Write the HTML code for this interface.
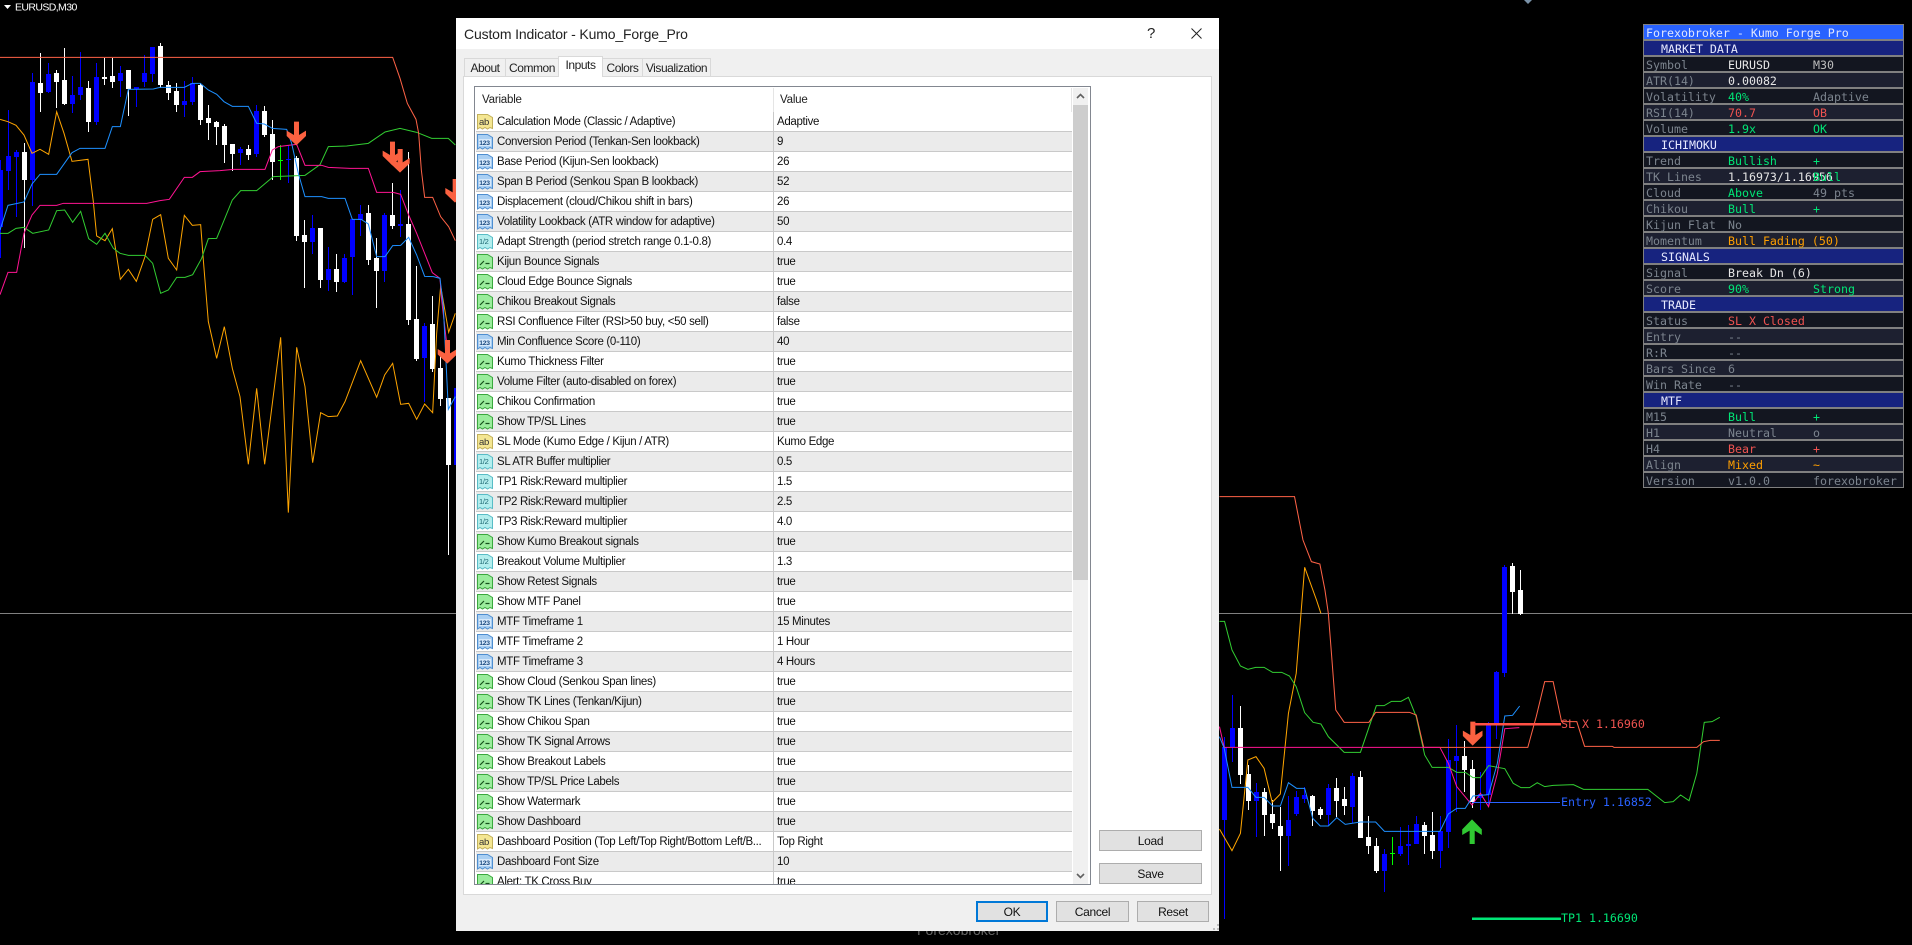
<!DOCTYPE html>
<html><head><meta charset="utf-8"><title>Custom Indicator</title>
<style>
html,body{margin:0;padding:0;background:#000;width:1912px;height:945px;overflow:hidden}
#chart{position:absolute;left:0;top:0}
.abs,.dlg div,.dash div{position:absolute}
.dlg{position:absolute;left:456px;top:18px;width:763px;height:913px;background:#f0f0f0;font-family:"Liberation Sans",sans-serif;color:#111}
.ttl{left:0;top:0;width:763px;height:31px;background:#fff}
.ttx{left:8px;top:7px;font-size:14px;line-height:18px;letter-spacing:-.15px;white-space:nowrap;color:#222}
.tab{top:40px;height:18px;background:#f0f0f0;border:1px solid #d9d9d9;border-bottom:none;box-sizing:border-box;text-align:center;font-size:12px;line-height:18px;letter-spacing:-.45px;color:#222}
.tab.on{top:38px;height:21px;background:#fff;line-height:17px;z-index:3}
.pane{left:7px;top:58px;width:749px;height:819px;background:#fff;border:1px solid #d9d9d9;box-sizing:border-box}
.lst{left:18px;top:68px;width:617px;height:799px;background:#fff;border:1px solid #828790;box-sizing:border-box}
.rows{left:20px;top:94px;width:596px;height:772px;overflow:hidden}
.dlg .r{position:relative;height:20px;box-sizing:border-box;border-bottom:1px solid #c9c9c9;white-space:nowrap;font-size:11.5px;line-height:19px;letter-spacing:-.33px}
.dlg .r:nth-child(even){background:#ebebeb}
.r svg{position:absolute;left:1px;top:1px;width:16px;height:17px}
.r b{position:absolute;left:21px;top:1px;font-weight:normal}
.r i{position:absolute;left:297px;top:0;width:1px;height:20px;background:#c9c9c9}
.r u{position:absolute;left:301px;top:1px;text-decoration:none}
.hd{font-size:11.5px;line-height:14px;color:#222;letter-spacing:-.2px}
.btn{background:#e1e1e1;border:1px solid #adadad;box-sizing:border-box;text-align:center;font-size:12px;line-height:20px;letter-spacing:-.3px;color:#111}
.dash{position:absolute;left:1643px;top:24px;width:261px;height:464px;background:#808080;font-family:"DejaVu Sans Mono",monospace;font-size:11.62px;color:#7c848e}
.d{left:1px;width:259px;height:14px;line-height:14px;white-space:pre}
.d span{position:absolute;top:1px}
.d .a{left:2px}.d .b{left:84px}.d .c{left:169px}
.o{background:#131620}.e{background:#1d2030}
.h{background:#17237f;color:#e8eaff}.h span{left:17px}
.w{color:#e6e6e6}.m{color:#bdbdbd}.g{color:#00e676}.x{color:#ef5350}.y{color:#ff9f00}
</style></head><body>
<svg id="chart" width="1912" height="945" viewBox="0 0 1912 945" xmlns="http://www.w3.org/2000/svg">
<rect width="1912" height="945" fill="#000"/>
<path d="M0 613.5H1912" stroke="#808080" stroke-width="1" shape-rendering="crispEdges"/>
<g shape-rendering="crispEdges">
<path fill="none" stroke="#0000ff" stroke-width="1" d="M.5 160V258M8.5 110V190M16.5 150V217M32.5 73V206M48.5 63V93M72.5 76V113M80.5 52V100M96.5 63V125M120.5 66V97M136.5 87V107M144.5 55V87M152.5 47V82M184.5 81V117M192.5 77V105M240.5 147V165M256.5 105V157M288.5 145V183M312.5 215V254M328.5 247V291M344.5 254V283M352.5 219V295M360.5 205V236M384.5 213V282M400.5 190V237M424.5 323V402M1224.5 737V919M1232.5 695V762M1256.5 783V837M1288.5 796V866M1296.5 791V816M1304.5 787V803M1328.5 784V826M1352.5 773V823M1384.5 849V892M1400.5 827V856M1408.5 825V865M1416.5 816V844M1440.5 816V868M1448.5 739V848M1456.5 725V812M1480.5 772V810M1488.5 722V807M1496.5 671V739M1504.5 565V677"/>
<path fill="#0000ff" d="M-2 170h5v57h-5zM6 156h5v15h-5zM14 152h5v5h-5zM30 82h5v98h-5zM46 74h5v18h-5zM70 95h5v9h-5zM78 87h5v8h-5zM94 77h5v45h-5zM118 73h5v8h-5zM134 87h5v2h-5zM142 73h5v9h-5zM150 47h5v27h-5zM182 101h5v4h-5zM190 83h5v19h-5zM238 149h5v4h-5zM254 111h5v43h-5zM286 159h5v1h-5zM310 228h5v14h-5zM326 269h5v11h-5zM342 258h5v24h-5zM350 219h5v38h-5zM358 214h5v6h-5zM382 215h5v56h-5zM398 224h5v2h-5zM422 326h5v32h-5zM454 388h5v77h-5zM1222 747h5v73h-5zM1230 728h5v19h-5zM1254 792h5v9h-5zM1286 820h5v16h-5zM1294 797h5v17h-5zM1302 795h5v4h-5zM1326 788h5v27h-5zM1350 776h5v31h-5zM1382 854h5v17h-5zM1398 846h5v8h-5zM1406 844h5v2h-5zM1414 824h5v20h-5zM1438 831h5v20h-5zM1446 760h5v72h-5zM1454 756h5v5h-5zM1478 794h5v4h-5zM1486 725h5v70h-5zM1494 672h5v51h-5zM1502 567h5v106h-5z"/>
<path fill="none" stroke="#fff" stroke-width="1" d="M24.5 143V248M40.5 53V112M56.5 70V108M64.5 48V105M88.5 81V132M104.5 58V85M112.5 58V88M128.5 70V116M160.5 43V88M168.5 81V100M176.5 83V112M200.5 83V125M208.5 105V140M216.5 121V145M224.5 124V163M232.5 144V171M248.5 145V160M264.5 106V137M272.5 120V180M296.5 156V241M304.5 220V288M320.5 228V288M336.5 254V292M368.5 205V265M376.5 238V308M392.5 183V229M408.5 152V325M416.5 266V361M432.5 296V372M440.5 355V406M448.5 398V555M1240.5 706V784M1248.5 765V810M1264.5 788V836M1272.5 800V829M1280.5 807V871M1312.5 795V826M1320.5 807V819M1336.5 778V817M1344.5 787V815M1360.5 771V838M1368.5 816V854M1376.5 838V873M1424.5 822V854M1432.5 812V859M1464.5 741V792M1472.5 760V808M1512.5 563V614M1520.5 570V615"/>
<path fill="#fff" d="M22 152h5v28h-5zM38 83h5v10h-5zM54 73h5v9h-5zM62 80h5v24h-5zM86 88h5v34h-5zM102 77h5v2h-5zM110 76h5v6h-5zM126 70h5v19h-5zM158 46h5v39h-5zM166 85h5v8h-5zM174 91h5v14h-5zM198 85h5v35h-5zM206 118h5v5h-5zM214 122h5v5h-5zM222 126h5v19h-5zM230 144h5v10h-5zM246 149h5v6h-5zM262 111h5v24h-5zM270 134h5v28h-5zM294 158h5v78h-5zM302 235h5v7h-5zM318 228h5v52h-5zM334 269h5v13h-5zM366 213h5v47h-5zM374 258h5v13h-5zM390 215h5v11h-5zM406 224h5v96h-5zM414 319h5v40h-5zM430 324h5v45h-5zM438 368h5v31h-5zM446 398h5v67h-5zM1238 728h5v47h-5zM1246 774h5v27h-5zM1262 792h5v23h-5zM1270 814h5v9h-5zM1278 826h5v10h-5zM1310 796h5v15h-5zM1318 809h5v6h-5zM1334 788h5v13h-5zM1342 799h5v7h-5zM1358 777h5v61h-5zM1366 837h5v9h-5zM1374 846h5v25h-5zM1422 825h5v11h-5zM1430 835h5v16h-5zM1462 756h5v14h-5zM1470 769h5v33h-5zM1510 566h5v26h-5zM1518 590h5v24h-5z"/>
<path fill="none" stroke="#00ff00" stroke-width="1" d="M280.5 145V180M278 160.5H283M1392.5 837V865M1390 853.5H1395"/>
</g>
<g fill="none" stroke-width="3" transform="scale(.33333)">
<polyline stroke="#ffa500" points="0,358 24,365 48,376 72,405 96,460 120,448 146,463 170,335 192,400 216,484 264,478 280,605 290,708 315,722 337,686 361,838 385,808 409,844 435,770 458,658 482,644 505,775 530,810 553,646 577,676 602,674 610,780 625,965 650,1075 673,980 697,1105 720,1190 745,1393 770,1165 794,1393 842,1012 865,1538 890,1042 915,1160 938,1388 962,1238 985,1250 1012,1248 1035,1205 1082,1082 1130,1192 1154,1125 1178,1090 1202,1213 1226,1210 1250,1258 1274,1212 1298,1238 1310,1000 1322,858 1346,997 1366,940"/>
<polyline stroke="#32cd32" points="0,700 24,700 48,685 72,682 98,700 146,690 170,632 194,630 218,667 242,634 266,716 290,733 315,700 340,745 360,760 385,766 435,766 458,790 482,880 505,870 530,832 555,832 578,824 605,775 625,716 650,715 697,600 722,572 770,572 820,530 915,526 960,494 985,440 1040,438 1105,430 1155,396 1200,385 1250,397 1295,415 1345,415 1366,435"/>
<polyline stroke="#ff6347" points="0,172 1178,172 1200,235 1222,310 1248,358 1256,400 1264,510 1274,592 1298,592 1322,650 1346,680 1366,722"/>
<polyline stroke="#ff1493" points="0,884 24,817 50,817 72,700 96,645 120,616 170,616 190,610 440,610 480,602 508,598 553,532 577,532 600,515 660,512 700,508 795,508 817,450 835,440 890,433 915,496 965,496 985,502 1050,505 1105,505 1130,577 1180,577 1202,583 1226,645 1250,700 1297,818 1320,835 1325,900 1340,1030"/>
<polyline stroke="#1e90ff" points="0,690 24,616 72,606 96,552 120,523 170,523 216,458 240,445 315,445 337,380 361,380 385,268 460,267 480,262 553,262 577,250 601,250 625,270 650,283 672,305 697,319 745,319 770,370 793,372 817,385 860,388 875,430 895,520 915,590 965,590 985,595 1035,595 1057,658 1083,658 1105,672 1130,770 1155,770 1178,737 1202,736 1226,712 1250,765 1274,829 1300,830 1320,835 1330,920 1345,1228 1366,1190"/>
<g fill="#fb6140" stroke="none">
<polygon points="882,365 897,365 897,405 918,392 918,408 889,436 860,408 860,392 882,405"/>
<polygon points="1170,425 1185,425 1185,465 1206,452 1206,468 1177,496 1148,468 1148,452 1170,465"/>
<polygon points="1193,447 1208,447 1208,487 1229,474 1229,490 1200,518 1171,490 1171,474 1193,487"/>
<polygon points="1335,1020 1350,1020 1350,1060 1371,1047 1371,1063 1342,1091 1313,1063 1313,1047 1335,1060"/>
<polygon points="1358,537 1373,537 1373,577 1394,564 1394,580 1365,608 1336,580 1336,564 1358,577"/>
</g>
</g>
<g fill="none" stroke-width="3" transform="translate(1210 540) scale(.33807 .33333)">
<polyline stroke="#ffa500" points="28,867 65,932 90,880 112,660 136,650 160,685 184,787 208,762 232,520 255,400 280,82 315,180 328,220"/>
<polyline stroke="#32cd32" points="28,244 43,244 65,330 90,378 112,388 135,382 160,382 185,397 212,397 235,408 255,440 280,518 305,547 328,552 350,590 397,637 445,637 492,497 515,497 537,484 565,484 587,472 610,530 635,645 657,682 705,682 730,697 755,697 778,713 800,713 824,677 872,686 897,730 920,743 945,743 968,728 990,740 1015,736 1075,734 1105,748 1295,748 1345,788 1370,785 1392,765 1417,782 1440,700 1462,547 1485,545 1508,532"/>
<polyline stroke="#ff6347" points="28,-130 250,-130 275,0 300,65 325,72 340,150 350,220 360,350 372,510 397,547 470,547 490,517 590,517 610,525 632,622 940,622 965,530 990,425 1015,425 1040,545 1085,545 1108,619 1190,619 1195,622 1440,622 1460,605 1480,601 1508,601"/>
<polyline stroke="#ff1493" points="28,560 42,622 680,622 705,670 730,740 775,795 800,760 824,800 850,700 872,566 915,563"/>
<polyline stroke="#1e90ff" points="28,590 42,625 65,742 112,742 136,772 160,772 185,798 208,798 232,728 256,745 280,745 304,835 326,858 350,858 375,833 400,853 445,846 490,846 516,874 680,874 705,822 730,805 755,805 778,768 824,764 850,670 872,528 895,526 916,498"/>
<polygon fill="#fb6140" stroke="none" points="770,545 785,545 785,585 806,572 806,588 777,617 748,588 748,572 770,585"/>
<polygon fill="#30c832" stroke="none" points="768,912 783,912 783,872 804,885 804,868 775,838 746,868 746,885 768,872"/>
</g>
<path d="M1474 724H1561" stroke="#ff5045" stroke-width="2.5" shape-rendering="crispEdges"/>
<path d="M1472 802.5H1560" stroke="#2962ff" stroke-width="1" shape-rendering="crispEdges"/>
<path d="M1472 918.5H1561" stroke="#00e676" stroke-width="2.5" shape-rendering="crispEdges"/>
<g font-family="'DejaVu Sans Mono',monospace" font-size="11.62">
<text x="1561" y="728" fill="#ef5350">SL X 1.16960</text>
<text x="1561" y="806" fill="#2962ff">Entry 1.16852</text>
<text x="1561" y="922" fill="#00e676">TP1 1.16690</text>
</g>
<polygon points="4,5 11,5 7.5,9" fill="#fff"/>
<text x="15" y="10.5" font-family="'Liberation Sans',sans-serif" font-size="10.5" letter-spacing="-.6" fill="#fff">EURUSD,M30</text>
<polygon points="1524,0 1532,0 1528,4" fill="#7a92a8"/>
<text x="917" y="935" font-family="'Liberation Sans',sans-serif" font-size="14" fill="#666">Forexobroker</text>
<symbol id="ab" viewBox="0 0 16 17"><path d="M.5 1.5H10.5L15.5 4.5V15.5L13 14.5 10.5 16 8 14.5 5.5 16 3 14.5.5 16Z" fill="#f4e692" stroke="#c2b05a"/><text x="2" y="12" font-family="'Liberation Sans',sans-serif" font-size="9.5" fill="#333">ab</text></symbol>
<symbol id="n" viewBox="0 0 16 17"><path d="M.5 1.5H10.5L15.5 4.5V15.5L13 14.5 10.5 16 8 14.5 5.5 16 3 14.5.5 16Z" fill="#a9cff3" stroke="#4e8ed0"/><rect x="2" y="6" width="12" height="7" fill="#d6e8fa"/><text x="2.3" y="12" font-family="'Liberation Sans',sans-serif" font-size="6.8" font-weight="bold" fill="#1a4a80">123</text></symbol>
<symbol id="f" viewBox="0 0 16 17"><path d="M.5 1.5H10.5L15.5 4.5V15.5L13 14.5 10.5 16 8 14.5 5.5 16 3 14.5.5 16Z" fill="#b3eeee" stroke="#58bcc6"/><text x="2" y="11" font-family="'Liberation Sans',sans-serif" font-size="7.5" fill="#1c6670">1/2</text></symbol>
<symbol id="t" viewBox="0 0 16 17"><path d="M.5 1.5H10.5L15.5 4.5V15.5L13 14.5 10.5 16 8 14.5 5.5 16 3 14.5.5 16Z" fill="#9aec9c" stroke="#3aa83e"/><path d="M3 12L7 8M8.5 10.5H12.5" stroke="#14501a" stroke-width="1.2" fill="none"/></symbol>
</svg>

<div class="dlg">
<div class="ttl"></div>
<div class="ttx">Custom Indicator - Kumo_Forge_Pro</div>
<div style="left:691px;top:7px;font-size:15px;line-height:18px;color:#222">?</div>
<svg class="abs" style="position:absolute;left:735px;top:10px" width="11" height="11"><path d="M.5.5L10.5 10.5M10.5.5L.5 10.5" stroke="#222" stroke-width="1" fill="none"/></svg>
<div class="pane"></div>
<div class="tab" style="left:8px;width:42px">About</div>
<div class="tab" style="left:49px;width:54px">Common</div>
<div class="tab on" style="left:102px;width:45px">Inputs</div>
<div class="tab" style="left:146px;width:41px">Colors</div>
<div class="tab" style="left:186px;width:69px">Visualization</div>
<div class="lst"></div>
<div class="hd" style="left:26px;top:75px">Variable</div>
<div class="hd" style="left:324px;top:75px">Value</div>
<div style="left:317px;top:70px;width:1px;height:24px;background:#e5e5e5"></div>
<div style="left:615px;top:70px;width:1px;height:24px;background:#e5e5e5"></div>
<div class="rows">
<div class="r"><svg><use href="#ab"/></svg><b>Calculation Mode (Classic / Adaptive)</b><i></i><u>Adaptive</u></div>
<div class="r"><svg><use href="#n"/></svg><b>Conversion Period (Tenkan-Sen lookback)</b><i></i><u>9</u></div>
<div class="r"><svg><use href="#n"/></svg><b>Base Period (Kijun-Sen lookback)</b><i></i><u>26</u></div>
<div class="r"><svg><use href="#n"/></svg><b>Span B Period (Senkou Span B lookback)</b><i></i><u>52</u></div>
<div class="r"><svg><use href="#n"/></svg><b>Displacement (cloud/Chikou shift in bars)</b><i></i><u>26</u></div>
<div class="r"><svg><use href="#n"/></svg><b>Volatility Lookback (ATR window for adaptive)</b><i></i><u>50</u></div>
<div class="r"><svg><use href="#f"/></svg><b>Adapt Strength (period stretch range 0.1-0.8)</b><i></i><u>0.4</u></div>
<div class="r"><svg><use href="#t"/></svg><b>Kijun Bounce Signals</b><i></i><u>true</u></div>
<div class="r"><svg><use href="#t"/></svg><b>Cloud Edge Bounce Signals</b><i></i><u>true</u></div>
<div class="r"><svg><use href="#t"/></svg><b>Chikou Breakout Signals</b><i></i><u>false</u></div>
<div class="r"><svg><use href="#t"/></svg><b>RSI Confluence Filter (RSI&gt;50 buy, &lt;50 sell)</b><i></i><u>false</u></div>
<div class="r"><svg><use href="#n"/></svg><b>Min Confluence Score (0-110)</b><i></i><u>40</u></div>
<div class="r"><svg><use href="#t"/></svg><b>Kumo Thickness Filter</b><i></i><u>true</u></div>
<div class="r"><svg><use href="#t"/></svg><b>Volume Filter (auto-disabled on forex)</b><i></i><u>true</u></div>
<div class="r"><svg><use href="#t"/></svg><b>Chikou Confirmation</b><i></i><u>true</u></div>
<div class="r"><svg><use href="#t"/></svg><b>Show TP/SL Lines</b><i></i><u>true</u></div>
<div class="r"><svg><use href="#ab"/></svg><b>SL Mode (Kumo Edge / Kijun / ATR)</b><i></i><u>Kumo Edge</u></div>
<div class="r"><svg><use href="#f"/></svg><b>SL ATR Buffer multiplier</b><i></i><u>0.5</u></div>
<div class="r"><svg><use href="#f"/></svg><b>TP1 Risk:Reward multiplier</b><i></i><u>1.5</u></div>
<div class="r"><svg><use href="#f"/></svg><b>TP2 Risk:Reward multiplier</b><i></i><u>2.5</u></div>
<div class="r"><svg><use href="#f"/></svg><b>TP3 Risk:Reward multiplier</b><i></i><u>4.0</u></div>
<div class="r"><svg><use href="#t"/></svg><b>Show Kumo Breakout signals</b><i></i><u>true</u></div>
<div class="r"><svg><use href="#f"/></svg><b>Breakout Volume Multiplier</b><i></i><u>1.3</u></div>
<div class="r"><svg><use href="#t"/></svg><b>Show Retest Signals</b><i></i><u>true</u></div>
<div class="r"><svg><use href="#t"/></svg><b>Show MTF Panel</b><i></i><u>true</u></div>
<div class="r"><svg><use href="#n"/></svg><b>MTF Timeframe 1</b><i></i><u>15 Minutes</u></div>
<div class="r"><svg><use href="#n"/></svg><b>MTF Timeframe 2</b><i></i><u>1 Hour</u></div>
<div class="r"><svg><use href="#n"/></svg><b>MTF Timeframe 3</b><i></i><u>4 Hours</u></div>
<div class="r"><svg><use href="#t"/></svg><b>Show Cloud (Senkou Span lines)</b><i></i><u>true</u></div>
<div class="r"><svg><use href="#t"/></svg><b>Show TK Lines (Tenkan/Kijun)</b><i></i><u>true</u></div>
<div class="r"><svg><use href="#t"/></svg><b>Show Chikou Span</b><i></i><u>true</u></div>
<div class="r"><svg><use href="#t"/></svg><b>Show TK Signal Arrows</b><i></i><u>true</u></div>
<div class="r"><svg><use href="#t"/></svg><b>Show Breakout Labels</b><i></i><u>true</u></div>
<div class="r"><svg><use href="#t"/></svg><b>Show TP/SL Price Labels</b><i></i><u>true</u></div>
<div class="r"><svg><use href="#t"/></svg><b>Show Watermark</b><i></i><u>true</u></div>
<div class="r"><svg><use href="#t"/></svg><b>Show Dashboard</b><i></i><u>true</u></div>
<div class="r"><svg><use href="#ab"/></svg><b>Dashboard Position (Top Left/Top Right/Bottom Left/B...</b><i></i><u>Top Right</u></div>
<div class="r"><svg><use href="#n"/></svg><b>Dashboard Font Size</b><i></i><u>10</u></div>
<div class="r"><svg><use href="#t"/></svg><b>Alert: TK Cross Buy</b><i></i><u>true</u></div>
</div>
<div style="left:617px;top:70px;width:15px;height:796px;background:#f0f0f0"></div>
<div style="left:617px;top:87px;width:15px;height:475px;background:#cdcdcd"></div>
<svg style="position:absolute;left:620px;top:75px" width="9" height="6"><path d="M1 5L4.5 1.5 8 5" stroke="#606060" stroke-width="1.6" fill="none"/></svg>
<svg style="position:absolute;left:620px;top:855px" width="9" height="6"><path d="M1 1L4.5 4.5 8 1" stroke="#606060" stroke-width="1.6" fill="none"/></svg>
<div class="btn" style="left:643px;top:812px;width:103px;height:21px">Load</div>
<div class="btn" style="left:643px;top:845px;width:103px;height:21px">Save</div>
<div class="btn" style="left:520px;top:883px;width:72px;height:21px;border:2px solid #0078d7;line-height:18px">OK</div>
<div class="btn" style="left:600px;top:883px;width:73px;height:21px">Cancel</div>
<div class="btn" style="left:681px;top:883px;width:72px;height:21px">Reset</div>
<svg style="position:absolute;left:757px;top:906px" width="6" height="6"><path d="M4 0h2v2H4zM0 4h2v2H0zM4 4h2v2H4z" fill="#bdbdbd"/></svg>
</div>

<div class="dash">
<div class="d" style="top:1px;background:#2962ff;color:#dfe6ff"><span class="a">Forexobroker - Kumo Forge Pro</span></div>
<div class="d h" style="top:17px"><span>MARKET DATA</span></div>
<div class="d o" style="top:33px"><span class="a">Symbol</span><span class="b w">EURUSD</span><span class="c m">M30</span></div>
<div class="d e" style="top:49px"><span class="a">ATR(14)</span><span class="b w">0.00082</span></div>
<div class="d o" style="top:65px"><span class="a">Volatility</span><span class="b g">40%</span><span class="c">Adaptive</span></div>
<div class="d e" style="top:81px"><span class="a">RSI(14)</span><span class="b x">70.7</span><span class="c x">OB</span></div>
<div class="d o" style="top:97px"><span class="a">Volume</span><span class="b g">1.9x</span><span class="c g">OK</span></div>
<div class="d h" style="top:113px"><span>ICHIMOKU</span></div>
<div class="d o" style="top:129px"><span class="a">Trend</span><span class="b g">Bullish</span><span class="c g">+</span></div>
<div class="d e" style="top:145px"><span class="a">TK Lines</span><span class="b w">1.16973/1.16956</span><span class="c g">Bull</span></div>
<div class="d o" style="top:161px"><span class="a">Cloud</span><span class="b g">Above</span><span class="c">49 pts</span></div>
<div class="d e" style="top:177px"><span class="a">Chikou</span><span class="b g">Bull</span><span class="c g">+</span></div>
<div class="d o" style="top:193px"><span class="a">Kijun Flat</span><span class="b">No</span></div>
<div class="d e" style="top:209px"><span class="a">Momentum</span><span class="b y">Bull Fading (50)</span></div>
<div class="d h" style="top:225px"><span>SIGNALS</span></div>
<div class="d o" style="top:241px"><span class="a">Signal</span><span class="b w">Break Dn (6)</span></div>
<div class="d e" style="top:257px"><span class="a">Score</span><span class="b g">90%</span><span class="c g">Strong</span></div>
<div class="d h" style="top:273px"><span>TRADE</span></div>
<div class="d o" style="top:289px"><span class="a">Status</span><span class="b x">SL X Closed</span></div>
<div class="d e" style="top:305px"><span class="a">Entry</span><span class="b">--</span></div>
<div class="d o" style="top:321px"><span class="a">R:R</span><span class="b">--</span></div>
<div class="d e" style="top:337px"><span class="a">Bars Since</span><span class="b">6</span></div>
<div class="d o" style="top:353px"><span class="a">Win Rate</span><span class="b">--</span></div>
<div class="d h" style="top:369px"><span>MTF</span></div>
<div class="d o" style="top:385px"><span class="a">M15</span><span class="b g">Bull</span><span class="c g">+</span></div>
<div class="d e" style="top:401px"><span class="a">H1</span><span class="b">Neutral</span><span class="c">o</span></div>
<div class="d o" style="top:417px"><span class="a">H4</span><span class="b x">Bear</span><span class="c x">+</span></div>
<div class="d e" style="top:433px"><span class="a">Align</span><span class="b y">Mixed</span><span class="c y">~</span></div>
<div class="d o" style="top:449px"><span class="a">Version</span><span class="b">v1.0.0</span><span class="c">forexobroker</span></div>
</div>
</body></html>
